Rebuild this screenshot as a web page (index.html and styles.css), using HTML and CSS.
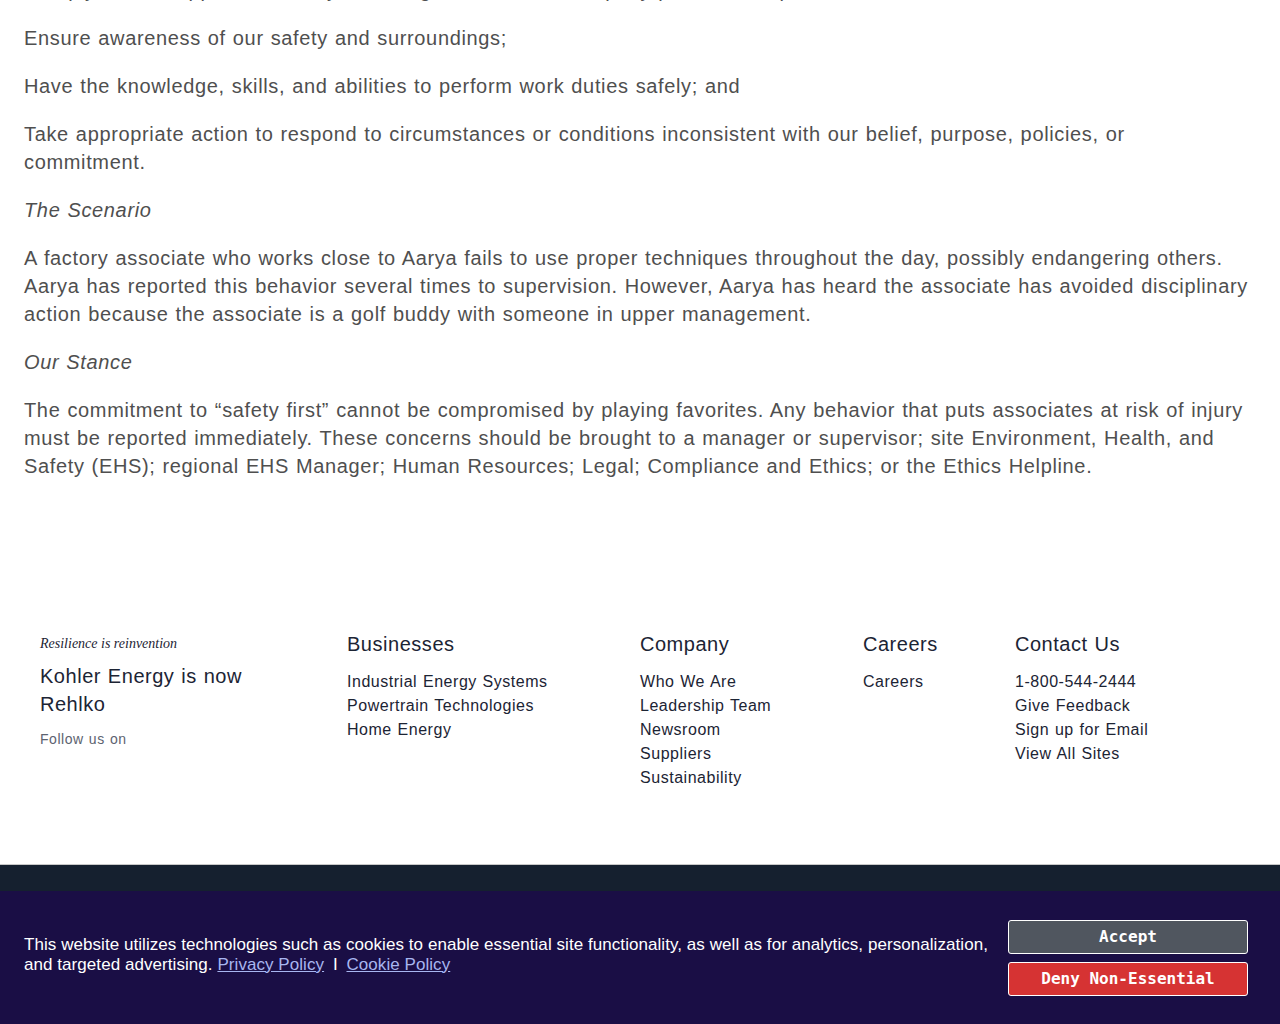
FILE: index.html
```html
<!DOCTYPE html>
<html lang="en">
<head>
<meta charset="utf-8">
<title>Safety - Code of Conduct</title>
<link rel="stylesheet" href="styles.css">
</head>
<body>
<main class="article">
  <p>Comply with all applicable safety laws, regulations, and Company policies and procedures;</p>
  <p>Ensure awareness of our safety and surroundings;</p>
  <p>Have the knowledge, skills, and abilities to perform work duties safely; and</p>
  <p>Take appropriate action to respond to circumstances or conditions inconsistent with our belief, purpose, policies, or<br>commitment.</p>
  <p class="sub">The Scenario</p>
  <p>A factory associate who works close to Aarya fails to use proper techniques throughout the day, possibly endangering others. Aarya has reported this behavior several times to supervision. However, Aarya has heard the associate has avoided disciplinary action because the associate is a golf buddy with someone in upper management.</p>
  <p class="sub">Our Stance</p>
  <p>The commitment to “safety first” cannot be compromised by playing favorites. Any behavior that puts associates at risk of injury must be reported immediately. These concerns should be brought to a manager or supervisor; site Environment, Health, and Safety (EHS); regional EHS Manager; Human Resources; Legal; Compliance and Ethics; or the Ethics Helpline.</p>
</main>

<footer class="footer">
  <div class="footer-main">
    <div class="brand">
      <p class="tagline">Resilience is reinvention</p>
      <p class="brand-title">Kohler Energy is now Rehlko</p>
      <p class="follow">Follow us on</p>
    </div>
    <nav class="col">
      <h3 class="col-title">Businesses</h3>
      <ul class="links">
        <li><a href="#">Industrial Energy Systems</a></li>
        <li><a href="#">Powertrain Technologies</a></li>
        <li><a href="#">Home Energy</a></li>
      </ul>
    </nav>
    <nav class="col">
      <h3 class="col-title">Company</h3>
      <ul class="links">
        <li><a href="#">Who We Are</a></li>
        <li><a href="#">Leadership Team</a></li>
        <li><a href="#">Newsroom</a></li>
        <li><a href="#">Suppliers</a></li>
        <li><a href="#">Sustainability</a></li>
      </ul>
    </nav>
    <nav class="col">
      <h3 class="col-title">Careers</h3>
      <ul class="links">
        <li><a href="#">Careers</a></li>
      </ul>
    </nav>
    <nav class="col">
      <h3 class="col-title">Contact Us</h3>
      <ul class="links">
        <li><a href="#">1-800-544-2444</a></li>
        <li><a href="#">Give Feedback</a></li>
        <li><a href="#">Sign up for Email</a></li>
        <li><a href="#">View All Sites</a></li>
      </ul>
    </nav>
  </div>
  <div class="footer-bar"></div>
</footer>

<div class="cookie-banner">
  <p class="cookie-text">This website utilizes technologies such as cookies to enable essential site functionality, as well as for analytics, personalization, and targeted advertising. <a href="#">Privacy Policy</a> <span class="sep">I</span> <a href="#">Cookie Policy</a></p>
  <div class="cookie-actions">
    <button class="btn btn-accept">Accept</button>
    <button class="btn btn-deny">Deny Non-Essential</button>
  </div>
</div>
</body>
</html>
```

FILE: styles.css
```css
* { box-sizing: border-box; }

html, body {
  margin: 0;
  padding: 0;
  background: #ffffff;
}

body {
  font-family: "Liberation Sans", Arial, sans-serif;
  color: #4f4f4f;
  letter-spacing: 0.528px;
  word-spacing: 0.8px;
}

.article {
  margin-top: -24px;
  padding: 0 24px;
}

.article p {
  margin: 0 0 20px;
  font-size: 20px;
  line-height: 28px;
  letter-spacing: 0.65px;
  word-spacing: 0.8px;
  color: #4f4f4f;
}

.article p.sub {
  font-style: italic;
}

.footer {
  padding-top: 130px;
}

.footer-main {
  display: grid;
  grid-template-columns: 307px 293px 223px 152px 1fr;
  padding: 0 24px 74px 40px;
  color: #1c2434;
}

.brand p { margin: 0; }

.tagline {
  font-family: "Liberation Serif", "Times New Roman", serif;
  font-style: italic;
  font-size: 14px;
  line-height: 28px;
  letter-spacing: 0;
  word-spacing: 0;
  color: #1c2434;
}

.brand-title {
  margin-top: 4px !important;
  font-size: 20px;
  line-height: 28px;
  width: 230px;
}

.follow {
  margin-top: 11px !important;
  font-size: 14px;
  line-height: 20px;
  color: #5c6370;
}

.col-title {
  margin: 0;
  font-size: 20px;
  line-height: 28px;
  font-weight: normal;
  color: #1c2434;
}

.links {
  list-style: none;
  margin: 12px 0 0;
  padding: 0;
}

.links li {
  font-size: 16px;
  line-height: 24px;
}

.links a {
  color: #1c2434;
  text-decoration: none;
}

.footer-bar {
  height: 160px;
  background: #15202f;
  border-top: 1px solid #c8c8c8;
}

.cookie-banner {
  position: fixed;
  left: 0;
  right: 0;
  bottom: 0;
  height: 133px;
  background: #1a0e45;
  display: flex;
  align-items: center;
  justify-content: space-between;
  gap: 16px;
  padding: 0 32px 0 24px;
  letter-spacing: 0;
  word-spacing: 0;
}

.cookie-text {
  margin: 0 0 6px;
  font-family: "Liberation Sans", Arial, sans-serif;
  font-size: 17px;
  line-height: 20px;
  letter-spacing: 0.06px;
  color: #ffffff;
  max-width: 975px;
}

.cookie-text a {
  color: #a8b6f0;
  text-decoration: underline;
}

.cookie-text .sep {
  margin: 0 4px;
}

.cookie-actions {
  display: flex;
  flex-direction: column;
  gap: 8px;
  width: 240px;
  flex-shrink: 0;
}

.btn {
  height: 34px;
  width: 240px;
  border: 1px solid #ffffff;
  border-radius: 3px;
  font-family: "DejaVu Sans Mono", "Liberation Mono", monospace;
  font-weight: bold;
  font-size: 16px;
  color: #ffffff;
  cursor: pointer;
}

.btn-accept { background: #50565f; }
.btn-deny { background: #d63333; }
```
